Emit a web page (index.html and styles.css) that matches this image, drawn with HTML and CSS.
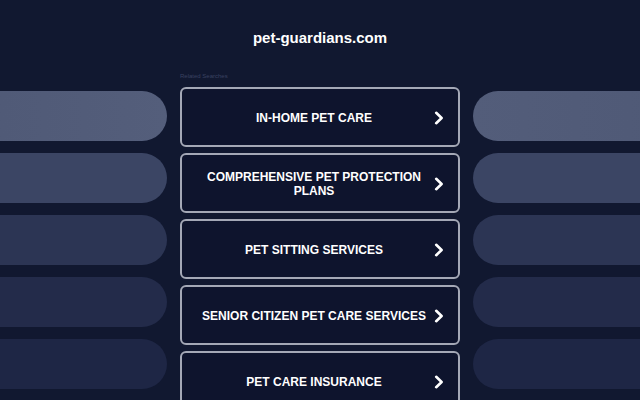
FILE: index.html
```html
<!DOCTYPE html>
<html lang="en">
<head>
<meta charset="utf-8">
<title>pet-guardians.com</title>
<link rel="stylesheet" href="styles.css">
</head>
<body>
<div class="page">
  <h1 class="domain">pet-guardians.com</h1>
  <div class="layout">
    <div class="side side-left">
      <div class="pill p1"></div>
      <div class="pill p2"></div>
      <div class="pill p3"></div>
      <div class="pill p4"></div>
      <div class="pill p5"></div>
    </div>
    <div class="center">
      <div class="label">Related Searches</div>
      <div class="links">
        <a class="link" href="#"><span class="link-text">IN-HOME PET CARE</span><svg class="chev" viewBox="0 0 10 14" width="10" height="14"><path d="M2.2 1.8 L7.6 7 L2.2 12.2" /></svg></a>
        <a class="link" href="#"><span class="link-text">COMPREHENSIVE PET PROTECTION PLANS</span><svg class="chev" viewBox="0 0 10 14" width="10" height="14"><path d="M2.2 1.8 L7.6 7 L2.2 12.2" /></svg></a>
        <a class="link" href="#"><span class="link-text">PET SITTING SERVICES</span><svg class="chev" viewBox="0 0 10 14" width="10" height="14"><path d="M2.2 1.8 L7.6 7 L2.2 12.2" /></svg></a>
        <a class="link" href="#"><span class="link-text">SENIOR CITIZEN PET CARE SERVICES</span><svg class="chev" viewBox="0 0 10 14" width="10" height="14"><path d="M2.2 1.8 L7.6 7 L2.2 12.2" /></svg></a>
        <a class="link" href="#"><span class="link-text">PET CARE INSURANCE</span><svg class="chev" viewBox="0 0 10 14" width="10" height="14"><path d="M2.2 1.8 L7.6 7 L2.2 12.2" /></svg></a>
      </div>
    </div>
    <div class="side side-right">
      <div class="pill p1"></div>
      <div class="pill p2"></div>
      <div class="pill p3"></div>
      <div class="pill p4"></div>
      <div class="pill p5"></div>
    </div>
  </div>
</div>
</body>
</html>
```

FILE: styles.css
```css
html, body {
  margin: 0;
  padding: 0;
  background: #111830;
  height: 100%;
  overflow: hidden;
}

.page {
  width: 640px;
  height: 400px;
  overflow: hidden;
  font-family: "Liberation Sans", Arial, sans-serif;
  color: #ffffff;
}

.domain {
  margin: 0;
  padding-top: 29px;
  font-size: 15px;
  line-height: 17px;
  font-weight: bold;
  text-align: center;
  color: #ffffff;
}

.layout {
  margin-top: 26px;
  display: grid;
  grid-template-columns: 167px 280px 167px;
  column-gap: 13px;
}

.side {
  display: flex;
  flex-direction: column;
  gap: 12px;
  padding-top: 19px;
  overflow: hidden;
}

.pill {
  height: 50px;
  border-radius: 25px;
  width: calc(100% + 40px);
  flex: none;
}

.side-left .pill {
  margin-left: -40px;
}

.p1 { background: #525c79; }
.p2 { background: #3b4564; }
.p3 { background: #2c3554; }
.p4 { background: #232b4a; }
.p5 { background: #1e2645; }

.side-left .p1 { background: linear-gradient(90deg, #4f5976, #545e7b); }
.side-right .p1 { background: linear-gradient(90deg, #535d7a, #4f5976); }

.center {
  display: flex;
  flex-direction: column;
}

.label {
  font-size: 6px;
  line-height: 8px;
  height: 8px;
  color: #3a4260;
  margin-bottom: 7px;
}

.links {
  display: flex;
  flex-direction: column;
  gap: 6px;
}

.link {
  box-sizing: border-box;
  height: 60px;
  border: 2px solid #a4a8b6;
  border-radius: 6px;
  background: #0e142d;
  display: flex;
  align-items: center;
  padding: 0 14px 0 18px;
  text-decoration: none;
  color: #ffffff;
  flex: none;
}

.link-text {
  flex: 1;
  text-align: center;
  font-size: 12px;
  line-height: 14px;
  font-weight: bold;
  padding-top: 1px;
}

.chev {
  flex: none;
  margin-left: 6px;
  margin-top: 1px;
}

.chev path {
  fill: none;
  stroke: #ffffff;
  stroke-width: 2.6;
  stroke-linecap: round;
  stroke-linejoin: round;
}
```
